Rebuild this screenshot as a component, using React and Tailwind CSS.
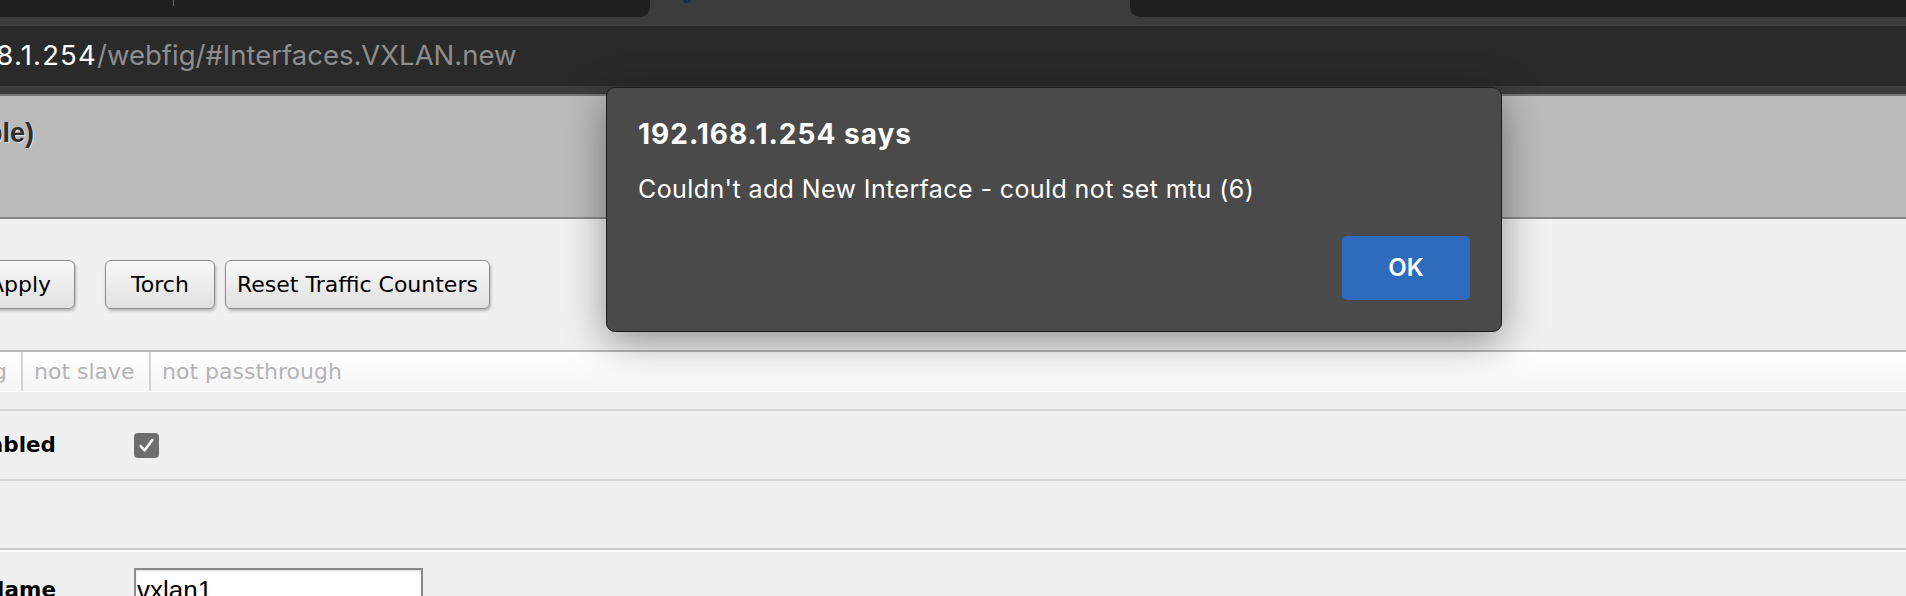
import React from 'react';

const pageFont = { fontFamily: '"DejaVu Sans", Verdana, sans-serif' };
const uiFont = { fontFamily: 'Inter, "Noto Sans", sans-serif' };

function Btn({ children, className = '' }) {
  return (
    <button
      className={`shrink-0 h-[49px] min-w-[110px] px-[11px] rounded-[6px] border-[1.5px] border-[#8c8c8c] bg-gradient-to-b from-[#f9f9f9] to-[#e0e0e0] text-[22px] text-black shadow-[1px_2px_3px_rgba(0,0,0,0.25)] ${className}`}
    >
      {children}
    </button>
  );
}

// label column clipped at the left edge of the window, text ends at x=56
function Label({ children, w = 'w-[56px]' }) {
  return (
    <div className={`flex ${w} shrink-0 justify-end overflow-hidden`}>
      <span className="shrink-0 whitespace-nowrap font-bold text-[21.5px] text-black [text-shadow:1px_1px_0_#ffffff]">
        {children}
      </span>
    </div>
  );
}

export default function App() {
  return (
    <div className="relative w-[1906px] h-[596px] overflow-hidden bg-[#f0f0f0]">
      {/* tab strip */}
      <div className="flex h-[17px] bg-[#3c3c3c]">
        <div className="flex w-[650px] bg-[#202020] rounded-br-[10px]">
          <div className="ml-[173px] w-px h-[6px] bg-[#6a6a6a]" />
        </div>
        <div className="flex-1">
          <div className="ml-[33px] w-[8px] h-[3px] rounded-b-full bg-[#1d2a38]" />
        </div>
        <div className="w-[776px] bg-[#202020] rounded-bl-[10px]" />
      </div>

      {/* toolbar + omnibox */}
      <div className="bg-[#3c3c3c] pt-[9px] pb-[8px]">
        <div className="flex h-[60px] items-center bg-[#2a2a2a] text-[27.5px] whitespace-nowrap" style={uiFont}>
          <div className="flex w-[97px] justify-end overflow-hidden">
            <span className="shrink-0 text-white tracking-[1.2px]">192.168.1.254</span>
          </div>
          <span className="text-[#8e8e8e]">/webfig/#Interfaces.VXLAN.new</span>
        </div>
      </div>
      <div className="h-[2px] bg-[#767676]" />

      {/* page */}
      <div style={pageFont}>
        <div className="h-[123px] bg-[#bbbbbb] border-b-2 border-[#8a8a8a] pt-[22px]">
          <div className="flex w-[34px] justify-end overflow-hidden">
            <span
              className="shrink-0 whitespace-nowrap font-bold text-[27px] leading-[30px] text-[#2e2e2e] [text-shadow:1px_1px_0_#e0e0e0]"
              style={{ fontFamily: '"Liberation Sans", Arial, sans-serif' }}
            >
              New Interface (disable)
            </span>
          </div>
        </div>

        {/* buttons */}
        <div className="flex h-[131px] items-center">
          <div className="flex w-[79px] shrink-0 justify-end overflow-hidden py-[6px] pr-[4px]">
            <Btn>OK</Btn>
            <Btn className="ml-[10px]">Cancel</Btn>
            <Btn className="ml-[10px]">Apply</Btn>
          </div>
          <Btn className="ml-[26px]">Torch</Btn>
          <Btn className="ml-[10px]">Reset Traffic Counters</Btn>
        </div>

        {/* status flags */}
        <div className="flex h-[42px] border-t-2 border-b border-t-[#b8b8b8] border-b-white bg-gradient-to-b from-white to-[#f5f5f5] text-[22px] text-[#b4b4b4] whitespace-nowrap">
          <div className="flex w-[21px] shrink-0 items-center justify-end overflow-hidden pr-[14px]">
            <span className="shrink-0">not running</span>
          </div>
          <div className="flex w-[128px] shrink-0 items-center border-l-2 border-[#d2d2d2] pl-[11px]">not slave</div>
          <div className="flex flex-1 items-center border-l-2 border-[#d2d2d2] pl-[11px]">not passthrough</div>
        </div>

        <div className="h-[19px] border-b-2 border-[#d6d6d6]" />

        {/* enabled */}
        <div className="flex h-[70px] items-center border-b-2 border-[#d6d6d6]">
          <Label>Enabled</Label>
          <div className="ml-[78px] flex h-[25px] w-[25px] items-center justify-center rounded-[4px] bg-[#6e6e6e]">
            <svg width="17" height="17" viewBox="0 0 16 16" fill="none">
              <path d="M2.5 8.5 L6.2 12.5 L13.5 2.8" stroke="#ffffff" strokeWidth="2.4" strokeLinecap="round" strokeLinejoin="round" />
            </svg>
          </div>
        </div>

        <div className="h-[67px]" />
        <div className="h-[2px] bg-[#c9c9c9]" />
        <div className="h-[2px] bg-white" />

        {/* name */}
        <div className="flex items-center pt-[16px]">
          <Label>Name</Label>
          <input
            readOnly
            value="vxlan1"
            className="ml-[78px] h-[44px] w-[289px] border-2 border-[#8a8a8a] bg-white pl-[1px] text-[26px] text-black outline-none shadow-[inset_0_1px_2px_rgba(0,0,0,0.15)]"
            style={{ fontFamily: '"Liberation Sans", Arial, sans-serif' }}
          />
        </div>
      </div>

      {/* alert dialog */}
      <div
        className="absolute left-[606px] top-[87px] w-[896px] h-[245px] rounded-[9px] border border-[#1c1c1c] bg-[#4a4a4a] px-[31px] pt-[30px] shadow-[0_10px_40px_rgba(0,0,0,0.4)]"
        style={uiFont}
      >
        <div className="text-[28px] font-bold leading-[32px] tracking-[1px] text-white">192.168.1.254 says</div>
        <div className="mt-[24px] text-[25px] leading-[30px] tracking-[0.4px] text-white">Couldn't add New Interface - could not set mtu (6)</div>
        <div className="mt-[32px] flex justify-end">
          <button className="h-[64px] w-[128px] rounded-[5px] bg-[#2e6bbd] text-[24px] font-semibold text-white">OK</button>
        </div>
      </div>
    </div>
  );
}
